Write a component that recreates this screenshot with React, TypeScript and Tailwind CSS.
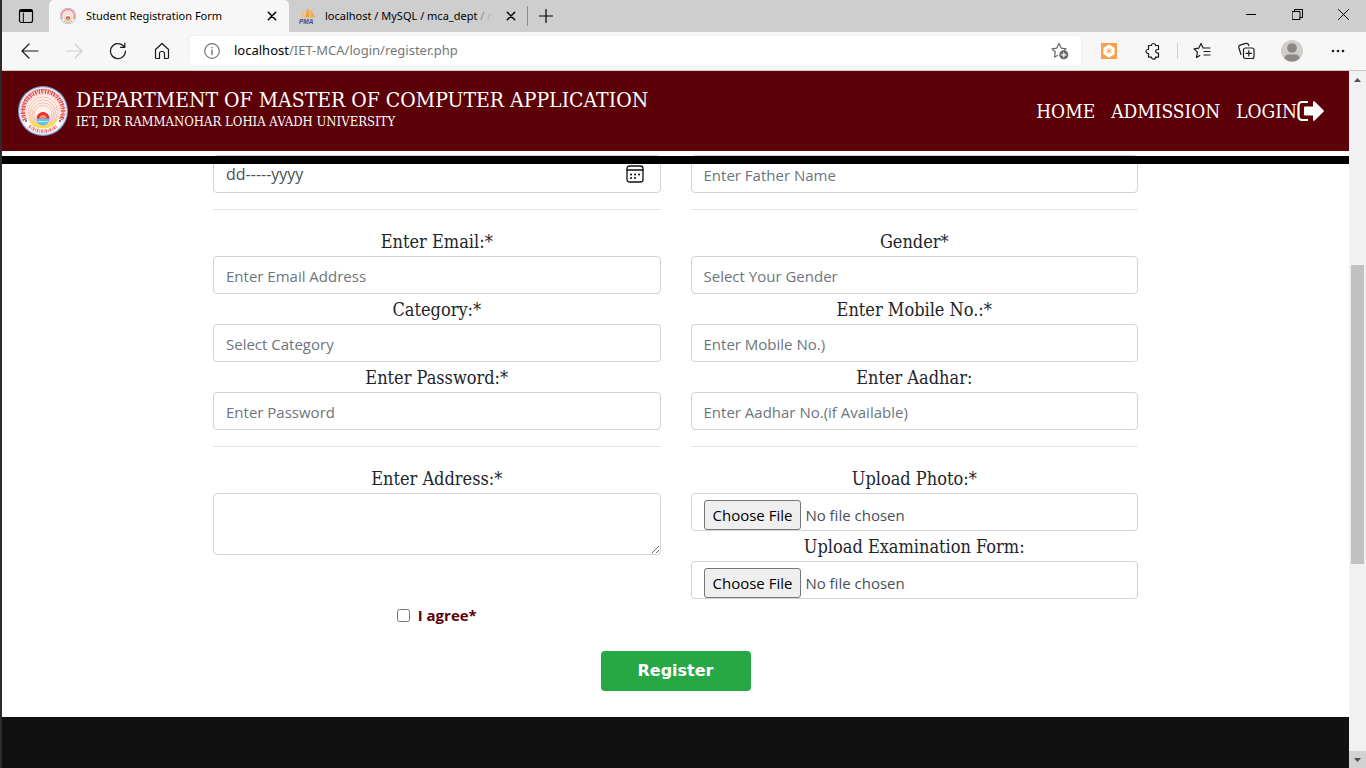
import type { ReactNode } from "react";

const sans = "font-['Open_Sans','Noto_Sans',sans-serif]";
const chromeSans = "font-['Noto_Sans','Open_Sans',sans-serif]";
const serif = "font-['DejaVu_Serif_Condensed','DejaVu_Serif',serif]";
const controlBase =
  "block h-[38px] w-full rounded-[4px] border border-[#ced4da] bg-white px-3 pb-[5px] pt-[7px] text-[15px] leading-6 placeholder:text-[#6c757d]";
const control = `${controlBase} text-[#495057]`;
const selectControl = `${controlBase} appearance-none text-[#6c757d]`;

function Icon({ size = 16, children, className = "" }: { size?: number; children: ReactNode; className?: string }) {
  return (
    <svg
      width={size}
      height={size}
      viewBox={`0 0 ${size} ${size}`}
      fill="none"
      stroke="currentColor"
      strokeWidth="1.2"
      strokeLinecap="round"
      strokeLinejoin="round"
      className={`shrink-0 ${className}`}
      aria-hidden="true"
    >
      {children}
    </svg>
  );
}

function Seal({ size }: { size: number }) {
  return (
    <svg width={size} height={size} viewBox="0 0 50 50" fill="none" className="shrink-0" role="img" aria-label="University seal">
      <circle cx="25" cy="25" r="25" fill="#7d9cc8" />
      <circle cx="25" cy="25" r="23.8" fill="#fff" />
      <circle cx="25" cy="25" r="22.8" stroke="#b9cbe6" strokeWidth=".5" />
      <path d="M7 34A20 20 0 1 1 43 34" stroke="#e8433f" strokeWidth="4.500" strokeDasharray="1.600 .9 .8 .7 1.300 1.100" />
      <path d="M5.800 31A20.500 20.500 0 1 1 44.200 31" stroke="#ee6a66" strokeWidth=".9" />
      <path d="M11.500 40A20 20 0 0 0 38.500 40" stroke="#ee6d68" strokeWidth="3.500" strokeDasharray="1.600 1 .8 .9" />
      <circle cx="25" cy="25" r="16.500" fill="#fff3ec" stroke="#f6b3aa" strokeWidth=".6" />
      <g stroke="#f5ab9c" strokeWidth=".8">
        <circle cx="25" cy="25.500" r="14.500" />
        <circle cx="25" cy="26.500" r="12.500" />
        <circle cx="25" cy="27.500" r="10.700" />
        <circle cx="25" cy="28.500" r="9" />
      </g>
      <path d="M10 31c1 7 7 11.500 15 11.500S39 38 40 31c-3 4-7 6-10 6H20c-3 0-7-2-10-6Z" fill="#fbd95e" />
      <circle cx="25" cy="33" r="6.500" fill="#5cc4e6" />
      <path d="M18.500 32.500a6.500 6.500 0 0 1 13 0Z" fill="#e8322f" />
      <path d="M21.500 32.500a3.500 3.500 0 0 1 7 0Z" fill="#f98f7c" />
      <path d="M19.500 35.500h11" stroke="#e9f8ff" strokeWidth=".7" />
      <circle cx="8" cy="35" r="1" fill="#3d4fa0" />
      <circle cx="42" cy="35" r="1" fill="#3d4fa0" />
    </svg>
  );
}

function CloseIcon() {
  return (
    <Icon size={10}>
      <path d="M1.300 1.300l7.400 7.400M8.700 1.300L1.300 8.700" strokeWidth="1.500" />
    </Icon>
  );
}

function TitleBar() {
  return (
    <div className={`flex h-8 bg-[#cecece] text-xs text-black ${chromeSans}`}>
      <button aria-label="Tab actions" className="flex w-[47px] items-center justify-center">
        <Icon>
          <rect x="1.500" y="1.500" width="13" height="13" rx="2" />
          <path d="M2 3.300h12M2 2.500h12" strokeWidth="1.600" />
          <path d="M5.300 5v9" strokeWidth="1" />
        </Icon>
      </button>
      <div className="flex w-60 items-center rounded-t-[5px] bg-[#f7f7f7] pl-[11px] pr-3">
        <Seal size={16} />
        <span className="ml-2.5 flex-1 whitespace-nowrap text-[11px]">Student Registration Form</span>
        <button aria-label="Close tab">
          <CloseIcon />
        </button>
      </div>
      <div className="flex w-[238px] items-center pl-2.5 pr-[11px]">
        <svg width="17" height="16" viewBox="0 0 17 16" className="shrink-0" aria-hidden="true">
          <path d="M5 1.500C4.500 4 2.500 7 1 9.500h4.800Z" fill="#fbc078" />
          <path d="M8.500 0C7.500 3.500 6.500 6.500 6.300 9.500h4.200C11 6 10.500 3 8.500 0Z" fill="#f8a03a" />
          <path d="M10.500 1c1.200 2.800 1.200 5.500 1 8.500H16C15 6 13 3 10.500 1Z" fill="#f8a94a" />
          <text x="0" y="15.500" fontSize="6.500" fontWeight="700" fontStyle="italic" fill="#4a4a80" fontFamily="Liberation Sans, sans-serif">
            PMA
          </text>
        </svg>
        <span className="ml-[9px] flex-1 overflow-hidden whitespace-nowrap text-[11px]">
          localhost / MySQL / mca_dept <span className="text-[#8a8a8a]">/</span> <span className="text-[#c3b5a8]">r</span>
        </span>
        <button aria-label="Close tab">
          <CloseIcon />
        </button>
      </div>
      <div className="mt-[6px] h-5 w-px bg-[#8b8b8b]" />
      <button aria-label="New tab" className="flex w-9 items-center justify-center">
        <Icon size={14}>
          <path d="M7 .5v13M.5 7h13" />
        </Icon>
      </button>
      <div className="ml-auto flex h-7">
        <button aria-label="Minimize" className="flex w-[46px] items-center justify-center">
          <Icon size={10}>
            <path d="M0 5.500h10" strokeWidth="1" />
          </Icon>
        </button>
        <button aria-label="Restore" className="flex w-[46px] items-center justify-center">
          <Icon size={11}>
            <path d="M.5 2.500h7.500v8h-7.500ZM2.500 2.500v-2h8v8H8" strokeWidth="1" />
          </Icon>
        </button>
        <button aria-label="Close window" className="flex w-[46px] items-center justify-center">
          <Icon size={11}>
            <path d="M.5 .5l10 10M10.500 .5l-10 10" strokeWidth="1" />
          </Icon>
        </button>
      </div>
    </div>
  );
}

const tool = "flex h-8 w-11 shrink-0 items-center justify-center";

function Toolbar() {
  return (
    <div className="flex h-[39px] items-center border-b border-[#c8c8c8] bg-[#f7f7f7] pl-1.5 pr-1.5 text-[#1b1b1b]">
      <button aria-label="Back" className={tool}>
        <Icon size={18}>
          <path d="M17 9H1.500M8 2L1 9l7 7" />
        </Icon>
      </button>
      <button aria-label="Forward" disabled className={`${tool} text-[#cfcfcf]`}>
        <Icon size={18}>
          <path d="M1 9h15.500M10 2l7 7-7 7" />
        </Icon>
      </button>
      <button aria-label="Refresh" className={tool}>
        <Icon size={18}>
          <path d="M16.500 9A7.500 7.500 0 1 1 14 3.500l1.500 1.500M15.800 1v4.300h-4.300" />
        </Icon>
      </button>
      <button aria-label="Home" className={tool}>
        <Icon size={18}>
          <path d="M2.500 7.500L9 1.500l6.500 6v8a1 1 0 0 1-1 1h-3v-5a2 2 0 0 0-2-2H8.500a2 2 0 0 0-2 2v5h-3a1 1 0 0 1-1-1Z" />
        </Icon>
      </button>
      <div className="mx-1.5 flex h-[30px] flex-1 items-center rounded-[4px] bg-white pl-3.5 pr-3 shadow-[0_0_4px_#ececec]">
        <Icon size={16} className="text-[#767676]">
          <circle cx="8" cy="8" r="7.300" />
          <path d="M8 7v4.500M8 4.500v.2" strokeWidth="1.400" />
        </Icon>
        <a href="#top" className={`ml-3.5 flex-1 text-[13px] text-[#767676] ${chromeSans}`}>
          <span className="text-black">localhost</span>/IET-MCA/login/register.php
        </a>
        <button aria-label="Add to favorites">
          <Icon size={18} className="text-[#666]">
            <path d="M6.500 13.500L3.500 15l.8-5L1 6.800l4.800-.7L8 1.500l2.200 4.600 4.800.7-1.500 1.500" />
            <circle cx="12.800" cy="12.800" r="4.500" fill="#666" stroke="none" />
            <path d="M12.800 10.500v4.600M10.500 12.800h4.600" stroke="#fff" />
          </Icon>
        </button>
      </div>
      <button aria-label="Extension" className={tool}>
        <svg width="16" height="16" viewBox="0 0 16 16" aria-hidden="true">
          <rect width="16" height="16" fill="#fb9f4b" />
          <path d="M8 1.500l5.600 3.200v6.600L8 14.500l-5.600-3.200V4.700Z" fill="#fff" />
          <path d="M8 5v6M5.500 6.500l5 3M10.500 6.500l-5 3" stroke="#fb9f4b" strokeWidth=".9" />
        </svg>
      </button>
      <button aria-label="Extensions" className={tool}>
        <Icon size={18}>
          <path d="M4.500 3.500h3a2 2 0 0 1 4 0h3v4h-1a1.800 1.800 0 0 0 0 3.700h1v4h-3a2 2 0 0 1-4 0h-3v-3.700H4a2 2 0 1 1 0-4h.5Z" />
        </Icon>
      </button>
      <div className="mx-0.5 h-4 w-px shrink-0 bg-[#d0d0d0]" />
      <button aria-label="Favorites" className={tool}>
        <Icon size={18}>
          <path d="M6.800 13.500L3.500 15.500l.9-5.300L1 6.800l4.800-.7L8 1.500l2 4.300M10 6h7M11 9.500h6M11 13h6" />
        </Icon>
      </button>
      <button aria-label="Collections" className={tool}>
        <Icon size={18}>
          <rect x="6.500" y="6" width="10.500" height="10.500" rx="2" />
          <path d="M11.800 8.500v5.500M9 11.300h5.500M4 12.500L1.800 5.500a2 2 0 0 1 1.300-2.400L9 1.400a2 2 0 0 1 2.500 1.300l.3 1" />
        </Icon>
      </button>
      <button aria-label="Profile" className={`${tool} ml-0.5`}>
        <svg width="22" height="22" viewBox="0 0 22 22" aria-hidden="true">
          <circle cx="11" cy="11" r="11" fill="#d0cdca" />
          <circle cx="11" cy="8" r="4.800" fill="#8b8785" />
          <path d="M3.500 18.500c0-3 2-4 4-4h7c2 0 4 1 4 4a11 11 0 0 1-15 0Z" fill="#8b8785" />
        </svg>
      </button>
      <button aria-label="Settings and more" className={`${tool} ml-0.5`}>
        <svg width="14" height="4" viewBox="0 0 14 4" fill="#1b1b1b" aria-hidden="true">
          <circle cx="2" cy="2" r="1.300" />
          <circle cx="7" cy="2" r="1.300" />
          <circle cx="12" cy="2" r="1.300" />
        </svg>
      </button>
    </div>
  );
}

function SiteHeader() {
  return (
    <header className={`flex h-20 items-center justify-between bg-[#5c0108] pl-4 pr-[25px] text-white ${serif}`}>
      <div className="flex items-center gap-2">
        <Seal size={50} />
        <div className="pb-1.5">
          <h1 className="text-[21px] leading-7">DEPARTMENT OF MASTER OF COMPUTER APPLICATION</h1>
          <p className="text-[13px] leading-4">IET, DR RAMMANOHAR LOHIA AVADH UNIVERSITY</p>
        </div>
      </div>
      <nav className="flex items-center gap-4 text-[19px]">
        <a href="#home">HOME</a>
        <a href="#admission">ADMISSION</a>
        <a href="#login" className="flex items-center">
          LOGIN
          <svg width="27" height="22" viewBox="0 0 27 22" aria-hidden="true">
            <path d="M11 2H5a3.500 3.500 0 0 0-3.500 3.500v11A3.500 3.500 0 0 0 5 20h6" fill="none" stroke="#fff" strokeWidth="2.200" />
            <path d="M7 7.500a1 1 0 0 1 1-1h8V2.200c0-1 1-1.400 1.700-.7l8.800 8.800a1 1 0 0 1 0 1.400l-8.800 8.800c-.7.700-1.700.3-1.700-.7v-4.300H8a1 1 0 0 1-1-1Z" fill="#fff" />
          </svg>
        </a>
      </nav>
    </header>
  );
}

function Field({ id, label, children }: { id: string; label: string; children: ReactNode }) {
  return (
    <div>
      <label htmlFor={id} className={`block pt-0.5 text-center text-[18px] leading-7 text-[#212529] ${serif}`}>
        {label}
      </label>
      {children}
    </div>
  );
}

function Rule() {
  return <hr className="my-4 border-t border-[#e5e5e5]" />;
}

const fileControl =
  "block h-[38px] w-full overflow-hidden rounded-[4px] border border-[#ced4da] bg-white px-3 py-1.5 text-[15px] leading-6 text-[#495057] file:mr-1 file:h-[30px] file:rounded-[3px] file:border file:border-solid file:border-[#767676] file:bg-[#efefef] file:px-2 file:text-[15px] file:text-black";

function RegistrationForm() {
  return (
    <form className="mx-auto w-full max-w-[925px] pb-[26px] pt-1">
      <div className="grid grid-cols-2 gap-x-[30px]">
        <div>
          <div className="flex h-[38px] items-center justify-between rounded-[4px] border border-[#ced4da] bg-white pl-3 pr-4 text-base leading-6 text-[#495057]">
            <input aria-label="Date of birth" defaultValue="dd-----yyyy" className="min-w-0 flex-1 outline-none" />
            <button type="button" aria-label="Pick a date">
              <Icon size={18} className="text-[#111]">
                <rect x="1" y="1" width="16" height="16" rx="2.500" strokeWidth="1.300" />
                <path d="M1 5h16" strokeWidth="1.300" />
                <path d="M5 9.500h.1M9 9.500h.1M13 9.500h.1M5 13h.1M9 13h.1" strokeWidth="2" />
              </Icon>
            </button>
          </div>
          <Rule />
          <Field id="email" label="Enter Email:*">
            <input id="email" type="email" placeholder="Enter Email Address" className={control} />
          </Field>
          <Field id="category" label="Category:*">
            <select id="category" className={selectControl}>
              <option>Select Category</option>
            </select>
          </Field>
          <Field id="password" label="Enter Password:*">
            <input id="password" type="password" placeholder="Enter Password" className={control} />
          </Field>
          <Rule />
          <Field id="address" label="Enter Address:*">
            <textarea
              id="address"
              className="block h-[62px] w-full resize rounded-[4px] border border-[#ced4da] bg-white px-3 py-1.5 text-[15px] text-[#495057]"
            />
          </Field>
        </div>
        <div>
          <input aria-label="Father name" placeholder="Enter Father Name" className={control} />
          <Rule />
          <Field id="gender" label="Gender*">
            <select id="gender" className={selectControl}>
              <option>Select Your Gender</option>
            </select>
          </Field>
          <Field id="mobile" label="Enter Mobile No.:*">
            <input id="mobile" type="tel" placeholder="Enter Mobile No.)" className={control} />
          </Field>
          <Field id="aadhar" label="Enter Aadhar:">
            <input id="aadhar" placeholder="Enter Aadhar No.(if Available)" className={control} />
          </Field>
          <Rule />
          <Field id="photo" label="Upload Photo:*">
            <input id="photo" type="file" className={fileControl} />
          </Field>
          <Field id="exam-form" label="Upload Examination Form:">
            <input id="exam-form" type="file" className={fileControl} />
          </Field>
        </div>
        <label className="mt-1 flex items-center justify-center gap-2 text-[15px] font-bold leading-6 text-[#5c0108]">
          <input type="checkbox" className="size-[13px]" />
          I agree*
        </label>
      </div>
      <button
        type="submit"
        className="mx-auto mt-6 block h-10 w-[150px] rounded-[4px] bg-[#28a745] font-['DejaVu_Sans',sans-serif] text-base font-bold text-white"
      >
        Register
      </button>
    </form>
  );
}

function ScrollBar() {
  return (
    <div className="flex w-[17px] shrink-0 flex-col bg-[#f1f1f1]" aria-hidden="true">
      <div className="flex h-[17px] items-center justify-center">
        <svg width="7" height="4" viewBox="0 0 7 4" fill="#505050">
          <path d="M0 4L3.500 0 7 4Z" />
        </svg>
      </div>
      <div className="flex-[177]" />
      <div className="mx-0.5 flex-[299] bg-[#c1c1c1]" />
      <div className="flex-[187]" />
      <div className="flex h-[17px] items-center justify-center bg-[#d2d2d2]">
        <svg width="7" height="4" viewBox="0 0 7 4" fill="#505050">
          <path d="M0 0h7L3.500 4Z" />
        </svg>
      </div>
    </div>
  );
}

export default function App() {
  return (
    <div className={`flex min-h-screen flex-col border-l-2 border-[#2f2a2c] bg-white ${sans}`}>
      <TitleBar />
      <Toolbar />
      <div className="flex flex-1">
        <div className="flex min-w-0 flex-1 flex-col">
          <SiteHeader />
          <main className="relative">
            <div className="absolute inset-x-0 top-[5px] h-2 bg-black" />
            <RegistrationForm />
          </main>
          <footer className="flex-1 bg-[#111]" />
        </div>
        <ScrollBar />
      </div>
    </div>
  );
}
